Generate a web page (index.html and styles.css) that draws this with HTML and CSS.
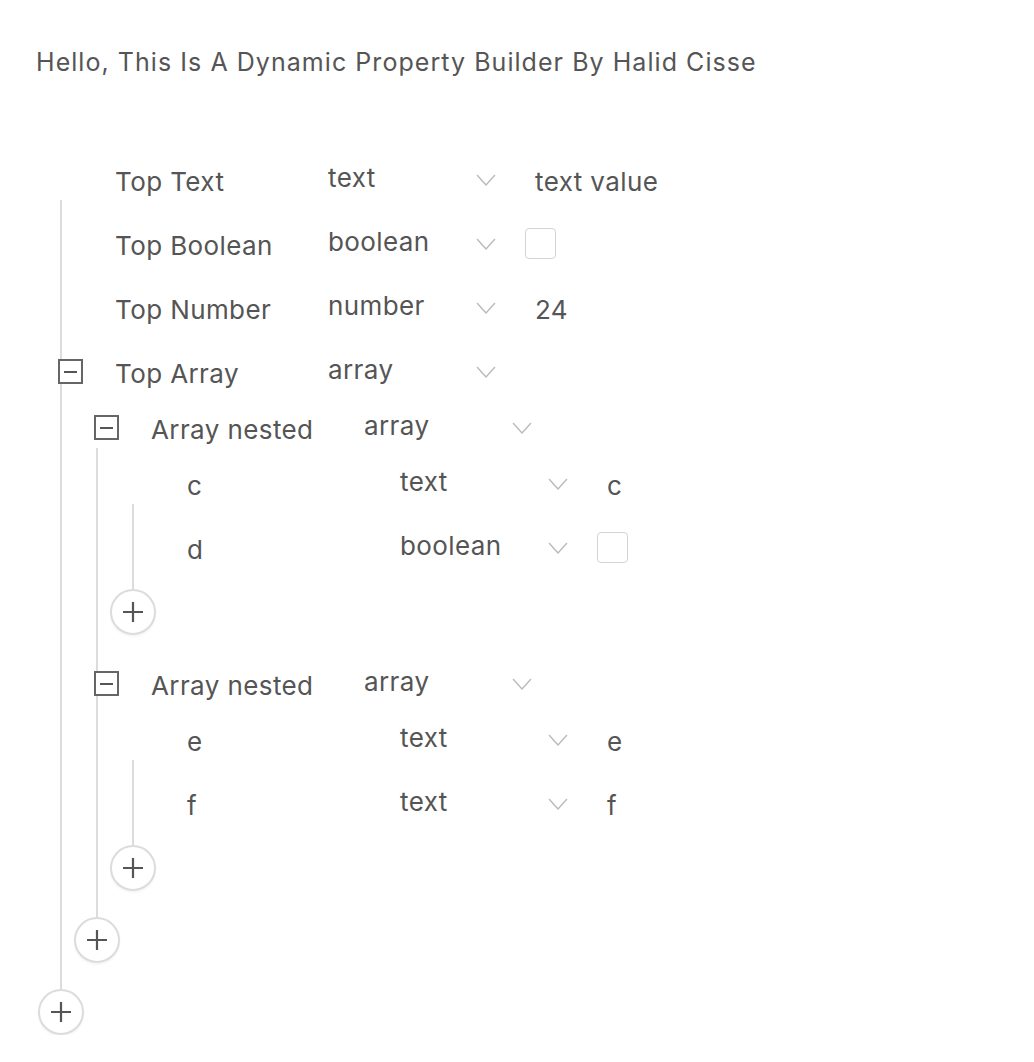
FILE: index.html
```html
<!DOCTYPE html>
<html lang="en">
<head>
<meta charset="utf-8">
<title>Dynamic Property Builder</title>
<link rel="stylesheet" href="styles.css">
</head>
<body>
<div class="page">
  <h1 class="title">Hello, This Is A Dynamic Property Builder By Halid Cisse</h1>

  <div class="list">
    <div class="row">
      <span class="toggle"></span>
      <span class="label">Top Text</span>
      <span class="type">text</span>
      <svg class="chev" viewBox="0 0 20 12"><path d="M1 1 L10 11 L19 1"/></svg>
      <span class="value">text value</span>
    </div>
    <div class="branch">
      <div class="row">
        <span class="toggle"></span>
        <span class="label">Top Boolean</span>
        <span class="type">boolean</span>
        <svg class="chev" viewBox="0 0 20 12"><path d="M1 1 L10 11 L19 1"/></svg>
        <span class="check"></span>
      </div>
      <div class="row">
        <span class="toggle"></span>
        <span class="label">Top Number</span>
        <span class="type">number</span>
        <svg class="chev" viewBox="0 0 20 12"><path d="M1 1 L10 11 L19 1"/></svg>
        <span class="value">24</span>
      </div>
      <div class="row">
        <span class="toggle"><span class="minus"></span></span>
        <span class="label">Top Array</span>
        <span class="type">array</span>
        <svg class="chev" viewBox="0 0 20 12"><path d="M1 1 L10 11 L19 1"/></svg>
      </div>

      <div class="list nested">
        <div class="row">
          <span class="toggle"><span class="minus"></span></span>
          <span class="label">Array nested</span>
          <span class="type">array</span>
          <svg class="chev" viewBox="0 0 20 12"><path d="M1 1 L10 11 L19 1"/></svg>
        </div>
        <div class="branch">
          <div class="list nested">
            <div class="row">
              <span class="toggle"></span>
              <span class="label">c</span>
              <span class="type">text</span>
              <svg class="chev" viewBox="0 0 20 12"><path d="M1 1 L10 11 L19 1"/></svg>
              <span class="value">c</span>
            </div>
            <div class="branch">
              <div class="row">
                <span class="toggle"></span>
                <span class="label">d</span>
                <span class="type">boolean</span>
                <svg class="chev" viewBox="0 0 20 12"><path d="M1 1 L10 11 L19 1"/></svg>
                <span class="check"></span>
              </div>
            </div>
            <button class="add" type="button"><svg viewBox="0 0 22 22"><path d="M11 1 V21 M1 11 H21"/></svg></button>
          </div>

          <div class="row">
            <span class="toggle"><span class="minus"></span></span>
            <span class="label">Array nested</span>
            <span class="type">array</span>
            <svg class="chev" viewBox="0 0 20 12"><path d="M1 1 L10 11 L19 1"/></svg>
          </div>
          <div class="list nested">
            <div class="row">
              <span class="toggle"></span>
              <span class="label">e</span>
              <span class="type">text</span>
              <svg class="chev" viewBox="0 0 20 12"><path d="M1 1 L10 11 L19 1"/></svg>
              <span class="value">e</span>
            </div>
            <div class="branch">
              <div class="row">
                <span class="toggle"></span>
                <span class="label">f</span>
                <span class="type">text</span>
                <svg class="chev" viewBox="0 0 20 12"><path d="M1 1 L10 11 L19 1"/></svg>
                <span class="value">f</span>
              </div>
            </div>
            <button class="add" type="button"><svg viewBox="0 0 22 22"><path d="M11 1 V21 M1 11 H21"/></svg></button>
          </div>
        </div>
        <button class="add" type="button"><svg viewBox="0 0 22 22"><path d="M11 1 V21 M1 11 H21"/></svg></button>
      </div>
    </div>
    <button class="add" type="button"><svg viewBox="0 0 22 22"><path d="M11 1 V21 M1 11 H21"/></svg></button>
  </div>
</div>
</body>
</html>
```

FILE: styles.css
```css
html, body {
  margin: 0;
  padding: 0;
  background: #fff;
}

body {
  font-family: Inter, "Liberation Sans", sans-serif;
  color: #555;
}

.page {
  padding: 47px 0 0 36px;
}

.title {
  margin: 0;
  font-size: 25px;
  line-height: 30px;
  font-weight: 400;
  letter-spacing: 1.05px;
  color: #555;
}

.list {
  display: flex;
  flex-direction: column;
  align-items: flex-start;
  margin: 87px 0 0 24px;
}

.list.nested {
  margin: 20px 0 5px 36px;
}

.branch {
  display: flex;
  flex-direction: column;
  align-items: flex-start;
  align-self: stretch;
  padding-bottom: 21px;
  background: linear-gradient(#dcdcdc, #dcdcdc) no-repeat 0 0 / 2px 100%;
}

.row {
  display: flex;
  align-items: center;
  height: 36px;
  font-size: 26px;
  line-height: 36px;
  letter-spacing: 0.4px;
}

.branch > .row {
  margin-top: 28px;
}

.toggle {
  flex: 0 0 55px;
  align-self: flex-start;
  height: 36px;
}

.minus {
  display: flex;
  align-items: center;
  justify-content: center;
  box-sizing: border-box;
  width: 25px;
  height: 25px;
  margin: 3px 0 0 -2px;
  border: 2px solid #666;
  background: #fff;
}

.minus::before {
  content: "";
  width: 13px;
  height: 2px;
  background: #555;
}

.label {
  flex: 0 0 213px;
  white-space: nowrap;
}

.type {
  flex: 0 0 148px;
  align-self: flex-start;
  line-height: 27px;
}

.chev {
  flex: 0 0 20px;
  width: 20px;
  height: 12px;
  align-self: flex-start;
  margin-top: 10px;
  fill: none;
  stroke: #bbb;
  stroke-width: 1.4;
}

.value {
  margin-left: 39px;
  white-space: nowrap;
}

.check {
  align-self: flex-start;
  box-sizing: border-box;
  width: 31px;
  height: 31px;
  margin-left: 29px;
  border: 1.5px solid #d4d4d4;
  border-radius: 4px;
}

.add {
  display: flex;
  align-items: center;
  justify-content: center;
  box-sizing: border-box;
  width: 46px;
  height: 46px;
  margin: 0 0 0 -22px;
  padding: 0;
  border: 2px solid #dcdcdc;
  border-radius: 50%;
  background: #fff;
  box-shadow: 0 2px 2px rgba(0, 0, 0, 0.04);
}

.add svg {
  width: 22px;
  height: 22px;
  fill: none;
  stroke: #555;
  stroke-width: 2.2;
}
```
